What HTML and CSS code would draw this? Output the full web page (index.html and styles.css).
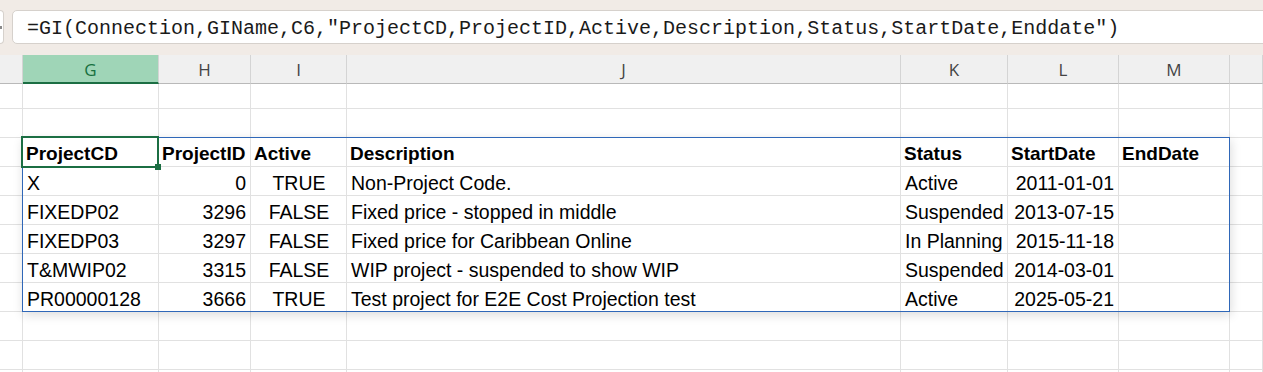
FILE: index.html
```html
<!DOCTYPE html>
<html>
<head>
<meta charset="utf-8">
<link rel="stylesheet" href="styles.css">
</head>
<body>
<div class="topbar">
  <div class="namebox"><span class="caret"></span></div>
  <div class="formula">=GI(Connection,GIName,C6,"ProjectCD,ProjectID,Active,Description,Status,StartDate,Enddate")</div>
</div>
<div class="sheet">
  <div class="row hdr">
    <div class="ch"></div>
    <div class="ch active">G</div>
    <div class="ch">H</div>
    <div class="ch">I</div>
    <div class="ch">J</div>
    <div class="ch">K</div>
    <div class="ch">L</div>
    <div class="ch">M</div>
    <div class="ch"></div>
  </div>

  <div class="row short"><div class="c"></div><div class="c"></div><div class="c"></div><div class="c"></div><div class="c"></div><div class="c"></div><div class="c"></div><div class="c"></div><div class="c"></div></div>

  <div class="row"><div class="c"></div><div class="c"></div><div class="c"></div><div class="c"></div><div class="c"></div><div class="c"></div><div class="c"></div><div class="c"></div><div class="c"></div></div>

  <div class="spill">
    <div class="row"><div class="c"></div><div class="c b sel">ProjectCD<span class="handle"></span></div><div class="c b">ProjectID</div><div class="c b">Active</div><div class="c b">Description</div><div class="c b">Status</div><div class="c b">StartDate</div><div class="c b">EndDate</div><div class="c"></div></div>

    <div class="row"><div class="c"></div><div class="c">X</div><div class="c num">0</div><div class="c ctr">TRUE</div><div class="c">Non-Project Code.</div><div class="c">Active</div><div class="c num">2011-01-01</div><div class="c"></div><div class="c"></div></div>

    <div class="row"><div class="c"></div><div class="c">FIXEDP02</div><div class="c num">3296</div><div class="c ctr">FALSE</div><div class="c">Fixed price - stopped in middle</div><div class="c">Suspended</div><div class="c num">2013-07-15</div><div class="c"></div><div class="c"></div></div>

    <div class="row"><div class="c"></div><div class="c">FIXEDP03</div><div class="c num">3297</div><div class="c ctr">FALSE</div><div class="c">Fixed price for Caribbean Online</div><div class="c">In Planning</div><div class="c num">2015-11-18</div><div class="c"></div><div class="c"></div></div>

    <div class="row"><div class="c"></div><div class="c">T&amp;MWIP02</div><div class="c num">3315</div><div class="c ctr">FALSE</div><div class="c">WIP project - suspended to show WIP</div><div class="c">Suspended</div><div class="c num">2014-03-01</div><div class="c"></div><div class="c"></div></div>

    <div class="row"><div class="c"></div><div class="c">PR00000128</div><div class="c num">3666</div><div class="c ctr">TRUE</div><div class="c">Test project for E2E Cost Projection test</div><div class="c">Active</div><div class="c num">2025-05-21</div><div class="c"></div><div class="c"></div></div>
  </div>

  <div class="row"><div class="c"></div><div class="c"></div><div class="c"></div><div class="c"></div><div class="c"></div><div class="c"></div><div class="c"></div><div class="c"></div><div class="c"></div></div>
  <div class="row"><div class="c"></div><div class="c"></div><div class="c"></div><div class="c"></div><div class="c"></div><div class="c"></div><div class="c"></div><div class="c"></div><div class="c"></div></div>
  <div class="row"><div class="c"></div><div class="c"></div><div class="c"></div><div class="c"></div><div class="c"></div><div class="c"></div><div class="c"></div><div class="c"></div><div class="c"></div></div>
</div>
</body>
</html>
```
FILE: styles.css
```css
html, body {
  margin: 0;
  padding: 0;
  background: #ffffff;
  overflow: hidden;
  height: 372px;
}
body {
  font-family: "Liberation Sans", Arial, sans-serif;
  color: #000;
}
.topbar {
  height: 55px;
  background: #f1ebe6;
  display: flex;
  align-items: flex-start;
  padding-top: 10px;
  box-sizing: border-box;
  overflow: hidden;
}
.namebox {
  flex: 0 0 auto;
  width: 4px;
  height: 34px;
  box-sizing: border-box;
  background: #fff;
  border: 1px solid #d6d1cc;
  border-left: none;
  border-radius: 0 5px 5px 0;
  margin-right: 8px;
  position: relative;
}
.caret {
  position: absolute;
  left: 0;
  top: 15px;
  width: 2px;
  height: 3px;
  background: #8a8a8a;
}
.formula {
  flex: 0 0 auto;
  width: 1300px;
  height: 34px;
  box-sizing: border-box;
  background: #fff;
  border: 1px solid #d6d1cc;
  border-radius: 5px;
  padding: 5px 0 1px 14px;
  font-family: "Liberation Mono", "DejaVu Sans Mono", monospace;
  font-size: 20px;
  line-height: 26px;
  color: #1a1a1a;
  white-space: nowrap;
}
.sheet {
  display: flex;
  flex-direction: column;
}
.row {
  display: grid;
  grid-template-columns: 23px 136px 92px 96px 554px 107px 111px 111px 1fr;
  height: 29px;
  flex: 0 0 auto;
}
.row.short { height: 25px; }
.ch {
  background: #f0f0f0;
  border-right: 1px solid #d4d4d4;
  border-bottom: 1px solid #b9b9b9;
  box-sizing: border-box;
  text-align: center;
  font-family: "Open Sans", "Liberation Sans", sans-serif;
  font-size: 17px;
  line-height: 24px;
  padding-top: 3px;
  color: #444444;
}
.ch.active {
  background: #9fd5b7;
  color: #17703f;
  border-bottom: 2px solid #1b6e43;
}
.c {
  border-right: 1px solid #e1e1e1;
  border-bottom: 1px solid #e1e1e1;
  box-sizing: border-box;
  font-size: 19.5px;
  line-height: 24px;
  padding: 4px 3px 0 4px;
  white-space: nowrap;
  overflow: hidden;
}
.b { font-weight: bold; font-size: 19px; padding-left: 3px; }
.num { text-align: right; padding-right: 4px; }
.ctr { text-align: center; }
.spill {
  position: relative;
}
.spill::after {
  content: "";
  position: absolute;
  left: 22px;
  top: -1px;
  width: 1208px;
  bottom: 0;
  box-sizing: border-box;
  border: 1px solid #2f67b8;
  box-shadow: 1px 3px 10px rgba(0, 0, 0, 0.14);
  pointer-events: none;
  z-index: 1;
}
.c.sel {
  overflow: visible;
  position: relative;
}
.c.sel::after {
  content: "";
  position: absolute;
  left: -2px;
  top: -2px;
  right: -1px;
  bottom: -2px;
  border: 2px solid #1b6e43;
  z-index: 2;
}
.handle {
  position: absolute;
  right: -3px;
  bottom: -4px;
  width: 6px;
  height: 6px;
  background: #1b6e43;
  z-index: 3;
}
```
